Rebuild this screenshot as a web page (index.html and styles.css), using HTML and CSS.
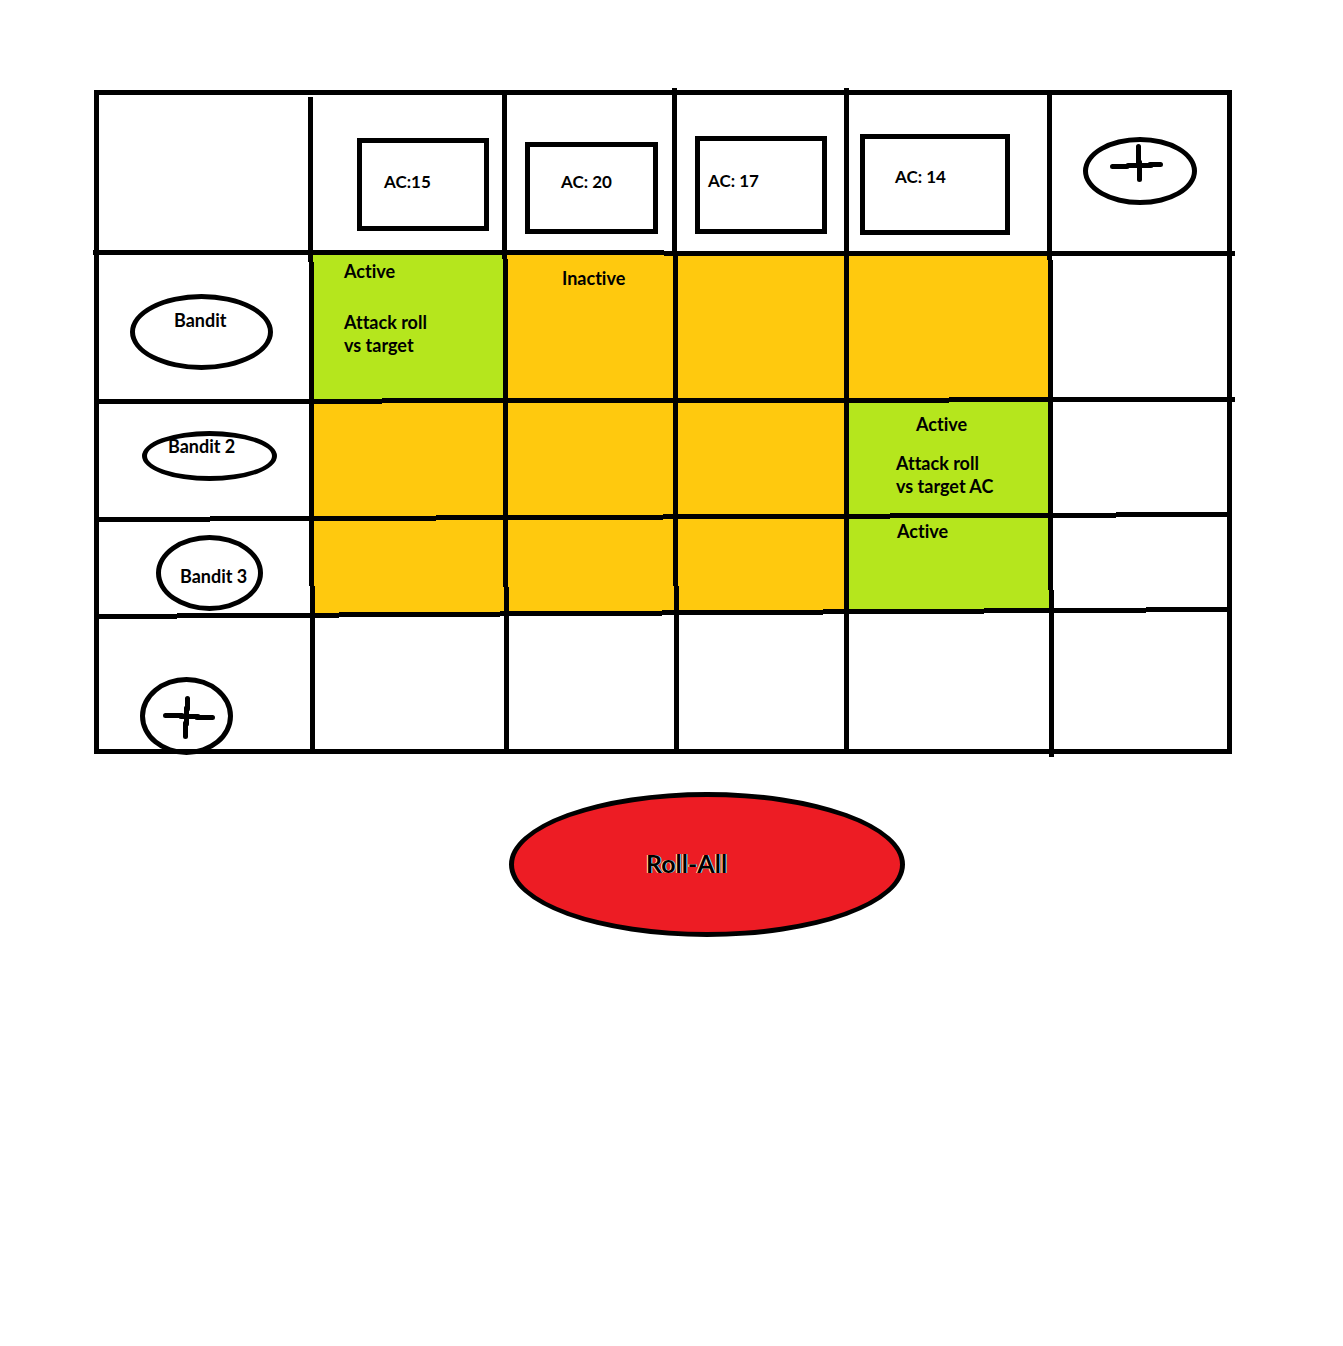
FILE: index.html
```html
<!DOCTYPE html>
<html lang="en">
<head>
<meta charset="utf-8">
<meta name="viewport" content="width=device-width, initial-scale=1">
<title>Attack grid</title>
<link rel="stylesheet" href="styles.css">
</head>
<body>
<main class="page">
  <div class="board">
    <table class="grid">
      <colgroup>
        <col class="col-names"><col class="col-a"><col class="col-b"><col class="col-c"><col class="col-d"><col class="col-add">
      </colgroup>
      <thead>
        <tr class="row-targets">
          <td></td>
          <th scope="col" class="cell-ac15"><div class="target target-ac15">AC:15</div></th>
          <th scope="col" class="cell-ac20"><div class="target target-ac20">AC: 20</div></th>
          <th scope="col" class="cell-ac17"><div class="target target-ac17">AC: 17</div></th>
          <th scope="col" class="cell-ac14"><div class="target target-ac14">AC: 14</div></th>
          <td class="cell-add-target">
            <button type="button" class="oval add-target" aria-label="Add target">
              <svg class="plus" viewBox="0 0 104 58" aria-hidden="true"><path d="M50.5 4.5V22M51.5 20V37.5M24.5 24.5H39M40 23.5H63M62 22.5H72.5"/></svg>
            </button>
          </td>
        </tr>
      </thead>
      <tbody>
        <tr class="row-bandit">
          <th scope="row" class="cell-bandit"><div class="oval bandit">Bandit</div></th>
          <td class="active cell-roll"><p>Active</p><p class="roll-wide">Attack roll<br>vs target</p></td>
          <td class="inactive cell-label">Inactive</td>
          <td class="inactive"></td>
          <td class="inactive"></td>
          <td></td>
        </tr>
        <tr class="row-bandit-2">
          <th scope="row" class="cell-bandit-2"><div class="oval bandit-2">Bandit 2</div></th>
          <td class="inactive"></td>
          <td class="inactive"></td>
          <td class="inactive"></td>
          <td class="active cell-roll-ac"><p class="indent">Active</p><p class="roll-close">Attack roll<br>vs target AC</p></td>
          <td></td>
        </tr>
        <tr class="row-bandit-3">
          <th scope="row" class="cell-bandit-3"><div class="oval bandit-3">Bandit 3</div></th>
          <td class="inactive"></td>
          <td class="inactive"></td>
          <td class="inactive"></td>
          <td class="active cell-short">Active</td>
          <td></td>
        </tr>
        <tr class="row-add">
          <td class="cell-add-attacker">
            <button type="button" class="oval add-attacker" aria-label="Add attacker">
              <svg class="plus" viewBox="0 0 83 68" aria-hidden="true"><path d="M42.5 16.5V27M41.5 26V42M40.5 41V54.5M20.5 33.5H37M36 34.5H53M52 35.5H67.5"/></svg>
            </button>
          </td>
          <td></td><td></td><td></td><td></td><td></td>
        </tr>
      </tbody>
    </table>
    <svg class="rules" viewBox="0 0 1138 664" preserveAspectRatio="none" aria-hidden="true">
      <path d="M2.5 2.5H1135.5V661.5H2.5Z"/>
      <path d="M216.5 7V172M217.5 172V496M218.5 496V660"/>
      <path d="M410.5 5V169M411.5 169V497M412.5 497V660"/>
      <path d="M580.5 -2V165M581.5 165V496M582.5 496V660"/>
      <path d="M752.5 -2V660"/>
      <path d="M955.5 5V170M956.5 170V500M957.5 500V667"/>
      <path d="M-1 162.5H570M570 163.5H1141"/>
      <path d="M0 311.5H288M288 310.5H855M855 309.5H1141"/>
      <path d="M0 429.5H116M116 428.5H342M342 427.5H569M569 426.5H796M796 425.5H1022M1022 424.5H1138"/>
      <path d="M0 526.5H83M83 525.5H245M245 524.5H406M406 523.5H568M568 522.5H729M729 521.5H890M890 520.5H1052M1052 519.5H1138"/>
    </svg>
  </div>
  <div class="actions">
    <button type="button" class="oval roll-all">Roll-All</button>
  </div>
</main>
</body>
</html>
```
FILE: styles.css
```css
* {
  box-sizing: border-box;
}

body {
  margin: 0;
  background: #fff;
  color: #000;
  font: bold 18px/23px Lato, "Open Sans", sans-serif;
  font-variant-ligatures: none;
}

p {
  margin: 0;
}

.page {
  padding: 90px 111px 40px 94px;
}

/* Grid */
.board {
  position: relative;
}

.grid {
  width: 100%;
  table-layout: fixed;
  border-collapse: separate;
  border-spacing: 0;
}

.grid th,
.grid td {
  padding: 0;
  text-align: left;
  vertical-align: top;
  white-space: nowrap;
}

.col-names { width: 217px; }
.col-a { width: 194px; }
.col-b { width: 170px; }
.col-c { width: 172px; }
.col-d { width: 203px; }
.col-add { width: 182px; }

.row-targets { height: 163px; }
.row-bandit { height: 148px; }
.row-bandit-2 { height: 116px; }
.row-bandit-3 { height: 96px; }
.row-add { height: 141px; }

.active { background: #b5e61d; }
.inactive { background: #ffc90e; }

/* Hand-ruled lines drawn over the cell edges */
.rules {
  position: absolute;
  inset: 0;
  width: 100%;
  height: 100%;
  overflow: visible;
  pointer-events: none;
  fill: none;
  stroke: #000;
  stroke-width: 5;
  shape-rendering: crispEdges;
}

/* Targets */
.target {
  border: 5px solid #000;
  font-size: 17px;
}

.grid .cell-ac15 { padding: 48px 0 0 46px; }
.grid .cell-ac20 { padding: 52px 0 0 20px; }
.grid .cell-ac17 { padding: 46px 0 0 20px; }
.grid .cell-ac14 { padding: 44px 0 0 13px; }

.target-ac15 { width: 132px; height: 93px; padding: 27px 0 0 22px; }
.target-ac20 { width: 133px; height: 92px; padding: 23px 0 0 31px; }
.target-ac17 { width: 132px; height: 98px; padding: 28px 0 0 8px; }
.target-ac14 { width: 150px; height: 101px; padding: 26px 0 0 30px; }

/* Attackers and buttons */
.oval {
  display: block;
  border: 5px solid #000;
  border-radius: 50%;
}

button {
  margin: 0;
  padding: 0;
  background: none;
  color: inherit;
  font: inherit;
  font-variant-ligatures: inherit;
  cursor: pointer;
}

.grid .cell-bandit { padding: 41px 0 0 36px; }
.grid .cell-bandit-2 { padding: 30px 0 0 48px; }
.grid .cell-bandit-3 { padding: 18px 0 0 62px; }
.grid .cell-add-target { padding: 47px 0 0 33px; }
.grid .cell-add-attacker { padding: 64px 0 0 46px; }

.bandit { width: 143px; height: 76px; padding: 10px 0 0 39px; }
.bandit-2 { width: 135px; height: 50px; padding: 0 0 0 21px; line-height: 20px; }
.bandit-3 { width: 107px; height: 76px; padding: 25px 0 0 19px; }
.add-target { width: 114px; height: 68px; }
.add-attacker { width: 93px; height: 78px; margin-bottom: -2px; }

.plus {
  display: block;
  width: 100%;
  height: 100%;
  fill: none;
  stroke: #000;
  stroke-width: 5;
  stroke-linecap: round;
}

/* Cell states */
.grid .cell-roll { padding: 7px 0 0 33px; }
.grid .cell-label { padding: 14px 0 0 57px; }
.grid .cell-roll-ac { padding: 12px 0 0 49px; }
.grid .cell-short { padding: 3px 0 0 50px; }

.indent { padding-left: 20px; }
.roll-wide { margin-top: 28px; }
.roll-close { margin-top: 16px; }

/* Roll button */
.actions {
  display: flex;
  justify-content: center;
  padding: 38px 0 0 88px;
}

.roll-all {
  width: 396px;
  height: 145px;
  padding: 0 0 4px 132px;
  background: #ed1c24;
  font-size: 25px;
  line-height: 30px;
  text-align: left;
  text-shadow: -1px 0 #ffe0a0, 1px 0 #a8e0ff;
}
```
